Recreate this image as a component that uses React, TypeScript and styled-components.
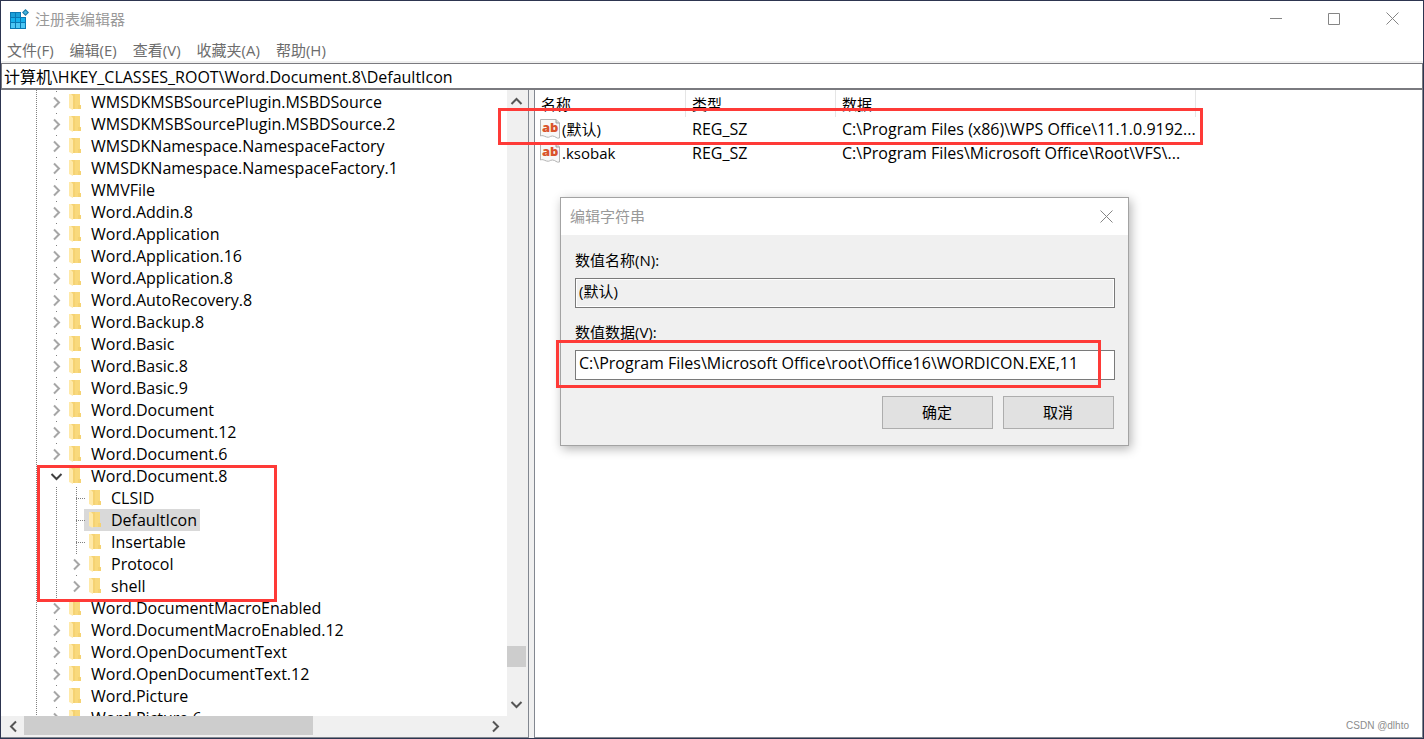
import React from "react";
import styled, { createGlobalStyle, css } from "styled-components";

const Global = createGlobalStyle`
  *, *::before, *::after { box-sizing: border-box; }
  body {
    margin: 0;
    background: #2d3550;
    color: #000;
    font: 15px/22px "Open Sans", "Noto Sans CJK SC", sans-serif;
  }
  button, input { font: inherit; color: inherit; }
  ul { list-style: none; margin: 0; padding: 0; }
`;

const Window = styled.div`
  position: relative;
  display: flex;
  flex-direction: column;
  height: 100vh;
  min-height: 480px;
  border: 1px solid #2d3550;
  background: #fff;
  overflow: hidden;
`;

const TitleBar = styled.header`
  display: flex;
  align-items: center;
  flex: none;
  height: 37px;
  padding: 0 2px 2px 8px;
  color: #999;
`;

const Title = styled.h1`
  flex: 1;
  margin: 0 0 0 6px;
  font-size: 15px;
  font-weight: 400;
`;

const PlainButton = styled.button`
  border: 0;
  padding: 0;
  background: none;
  display: flex;
  align-items: center;
  justify-content: center;
`;

const CaptionButton = styled(PlainButton)`
  width: 58px;
  height: 34px;
`;

const MenuBar = styled.nav`
  display: flex;
  flex: none;
  gap: 16px;
  height: 25px;
  padding: 0 6px;
  color: #6d6d6d;
  border-bottom: 2px solid #f0f0f0;
`;

const MenuButton = styled(PlainButton)`
  height: 23px;
  white-space: nowrap;
`;

const AddressInput = styled.input`
  flex: none;
  width: 100%;
  height: 27px;
  padding: 0 2px;
  border: 1px solid #7a7a7f;
  border-bottom-width: 2px;
  background: #fff;
  outline: 0;
  font-size: 16px;
`;

const Panes = styled.div`
  display: flex;
  flex: 1;
  min-height: 0;
  background: #f0f0f0;
  gap: 5px;
`;

const TreePane = styled.section`
  display: grid;
  grid-template-columns: 1fr 21px;
  grid-template-rows: minmax(0, 1fr) 21px;
  flex: none;
  width: 528px;
  border-right: 1px solid #828790;
  border-bottom: 1px solid #828790;
  background: #f0f0f0;
`;

const dotted = (angle: string) => css`
  background-image: repeating-linear-gradient(${angle}, #808080 0 1px, transparent 1px 2px);
`;

const TreeView = styled.div`
  position: relative;
  overflow: hidden;
  padding: 1px 0 0 35px;
  background: #fff;
  font-size: 16px;

  &::before {
    content: "";
    position: absolute;
    left: 35px;
    top: 0;
    bottom: 0;
    width: 1px;
    ${dotted("180deg")}
  }
`;

const Branch = styled.li`
  position: relative;
`;

const ChildList = styled.ul`
  padding-left: 20px;
`;

const ParentLine = styled.span`
  position: absolute;
  left: 20px;
  top: 22px;
  bottom: 0;
  width: 1px;
  ${dotted("180deg")}
`;

const Row = styled.div`
  display: flex;
  align-items: center;
  height: 22px;
`;

const Twisty = styled.span<{ $leaf?: boolean }>`
  position: relative;
  display: flex;
  align-items: center;
  justify-content: center;
  flex: none;
  width: 28px;
  height: 22px;
  padding-left: 12px;

  &::before {
    content: "";
    position: absolute;
    left: 20px;
    top: 0;
    width: 1px;
    height: ${(p) => (p.$leaf ? 22 : 1)}px;
    ${dotted("180deg")}
  }

  &::after {
    content: "";
    position: absolute;
    left: 20px;
    top: 11px;
    width: 9px;
    height: 1px;
    ${(p) => (p.$leaf ? dotted("90deg") : "")}
  }
`;

const NodeLabel = styled.span<{ $selected?: boolean }>`
  display: flex;
  align-items: center;
  gap: 8px;
  height: 22px;
  padding: 0 3px 0 5px;
  white-space: nowrap;
  background: ${(p) => (p.$selected ? "#d9d9d9" : "transparent")};
`;

const Mark = styled.span<{ $top: number; $right: number; $bottom: number; $left: number }>`
  position: absolute;
  z-index: 2;
  top: ${(p) => p.$top}px;
  right: ${(p) => p.$right}px;
  bottom: ${(p) => p.$bottom}px;
  left: ${(p) => p.$left}px;
  border: 3px solid #fe3a37;
  pointer-events: none;
`;

const VerticalBar = styled.div`
  display: flex;
  flex-direction: column;
  margin-right: 2px;
`;

const HorizontalBar = styled.div`
  display: flex;
  padding: 0 1px 0 2px;
`;

const ArrowButton = styled(PlainButton)`
  flex: none;
  width: 21px;
  height: 20px;
`;

const BarArrow = styled(ArrowButton)`
  width: 19px;
  height: 23px;
`;

const Track = styled.div<{ $vertical?: boolean }>`
  display: flex;
  flex: 1;
  flex-direction: ${(p) => (p.$vertical ? "column" : "row")};
`;

const Before = styled.div<{ $grow: number }>`
  flex: ${(p) => p.$grow};
`;

const Thumb = styled.div<{ $vertical?: boolean }>`
  flex: none;
  width: ${(p) => (p.$vertical ? "19px" : "289px")};
  height: ${(p) => (p.$vertical ? "21px" : "19px")};
  background: #cdcdcd;
`;

const ValuePane = styled.section`
  flex: 1;
  min-width: 0;
  border: solid #828790;
  border-width: 0 1px 1px 1px;
  background: #fff;
`;

const ValueTable = styled.table`
  position: relative;
  width: 661px;
  table-layout: fixed;
  border-collapse: separate;
  border-spacing: 0;
  text-align: left;
`;

const HeadCell = styled.th<{ $width: number }>`
  width: ${(p) => p.$width}px;
  height: 27px;
  padding: 0 6px;
  font-weight: 400;
  border-right: 1px solid #e5e5e5;
`;

const Cell = styled.td`
  height: 24px;
  padding: 0 0 0 6px;
  white-space: nowrap;
  font-size: 16px;
`;

const NameCell = styled.div`
  display: flex;
  align-items: center;
  gap: 2px;
  margin-left: -1px;
  font-size: 15px;
`;

const Dialog = styled.form`
  position: absolute;
  left: 559px;
  top: 196px;
  width: 569px;
  border: 1px solid #a3a3a3;
  background: #f0f0f0;
  box-shadow: 2px 3px 10px rgba(0, 0, 0, 0.3);
`;

const DialogTitle = styled.div`
  display: flex;
  align-items: center;
  justify-content: space-between;
  height: 37px;
  padding: 0 0 1px 9px;
  background: #fff;
  color: #999;
`;

const DialogClose = styled(PlainButton)`
  width: 43px;
  height: 36px;
`;

const DialogBody = styled.div`
  display: flex;
  flex-direction: column;
  padding: 14px 13px 16px 14px;
`;

const Field = styled.div`
  position: relative;
  display: flex;
  flex-direction: column;
  gap: 7px;
  margin-bottom: 13px;
`;

const FieldInput = styled.input<{ $muted?: boolean }>`
  height: 30px;
  padding: ${(p) => (p.$muted ? "0 3px 6px" : "0 3px 4px")};
  border: 1px solid #7a7a7a;
  outline: 0;
  background: ${(p) => (p.$muted ? "#f0f0f0" : "#fff")};
  box-shadow: inset 0 0 0 1px #fff;
  font-size: ${(p) => (p.$muted ? 15 : 16)}px;
`;

const Actions = styled.div`
  display: flex;
  justify-content: flex-end;
  gap: 10px;
  padding: 3px 1px 0 0;
`;

const ActionButton = styled.button`
  width: 111px;
  height: 33px;
  padding: 0 1px 2px 0;
  border: 1px solid #adadad;
  background: #e1e1e1;
`;

const Credit = styled.small`
  position: absolute;
  right: 14px;
  bottom: 4px;
  font: 10px/16px "Liberation Sans", sans-serif;
  color: #8c8c8c;
`;

const RegistryIcon = () => (
  <svg width="20" height="20" viewBox="0 0 20 20" aria-hidden="true">
    <path d="M1 3h11v5h5v12H1z" fill="#0878b4" />
    <path d="M2 4h4v4H2zM7 4h4v4H7z" fill="#1a9fd8" />
    <path d="M2 9h4v4H2zM7 9h4v4H7zM12 9h4v4h-4z" fill="#16b0ec" />
    <path d="M2 14h4v5H2zM7 14h4v5H7zM12 14h4v5h-4z" fill="#4cc6f4" />
    <path d="M16.500 0L20 3.500 16.500 7 13 3.500z" fill="#1778a8" />
    <path d="M16.500 1.500l2 2-2 2-2-2z" fill="#45b4dd" />
  </svg>
);

const FolderIcon = () => (
  <svg width="14" height="16" viewBox="0 0 14 16" aria-hidden="true">
    <path d="M2 0h9v11h1v4H2z" fill="#f5d272" />
    <path d="M6 0h5v11H9v4H6z" fill="#f9d97c" />
    <path d="M0 0h2l2 2v14l-4-2z" fill="#ffe9a8" />
  </svg>
);

const StringIcon = () => (
  <svg width="20" height="20" viewBox="0 0 20 20" overflow="visible" aria-hidden="true">
    <path d="M.5.500H16l3.500 3.500v15c-3 1-4-2-7-2s-3 2-6 1-4-2-6-1z" fill="#f7f7f7" stroke="#b4b4b4" />
    <path d="M16 .5V4h3.500" fill="#ddd" stroke="#a0a0a0" />
    <text x="2" y="13" fontFamily="Open Sans, sans-serif" fontSize="13" fontWeight="800" fill="#d9532c">ab</text>
  </svg>
);

const CloseIcon = () => (
  <svg width="13" height="13" viewBox="0 0 13 13" stroke="#858585" aria-hidden="true">
    <path d="M.5.5l12 12M12.500.5l-12 12" />
  </svg>
);

const turns = { right: 0, down: 90, left: 180, up: 270 };

const Chevron = ({ to, color = "#555" }: { to: keyof typeof turns; color?: string }) => (
  <svg width="13" height="13" viewBox="0 0 13 13" fill="none" stroke={color} strokeWidth="2" aria-hidden="true">
    <path d="M4 1.500l5 5-5 5" transform={`rotate(${turns[to]} 6.500 6.500)`} />
  </svg>
);

type Node = { name: string; leaf?: boolean; selected?: boolean; children?: Node[] };

const nodes: Node[] = [
  { name: "WMSDKMSBSourcePlugin.MSBDSource" },
  { name: "WMSDKMSBSourcePlugin.MSBDSource.2" },
  { name: "WMSDKNamespace.NamespaceFactory" },
  { name: "WMSDKNamespace.NamespaceFactory.1" },
  { name: "WMVFile" },
  { name: "Word.Addin.8" },
  { name: "Word.Application" },
  { name: "Word.Application.16" },
  { name: "Word.Application.8" },
  { name: "Word.AutoRecovery.8" },
  { name: "Word.Backup.8" },
  { name: "Word.Basic" },
  { name: "Word.Basic.8" },
  { name: "Word.Basic.9" },
  { name: "Word.Document" },
  { name: "Word.Document.12" },
  { name: "Word.Document.6" },
  {
    name: "Word.Document.8",
    children: [
      { name: "CLSID", leaf: true },
      { name: "DefaultIcon", leaf: true, selected: true },
      { name: "Insertable", leaf: true },
      { name: "Protocol" },
      { name: "shell" },
    ],
  },
  { name: "Word.DocumentMacroEnabled" },
  { name: "Word.DocumentMacroEnabled.12" },
  { name: "Word.OpenDocumentText" },
  { name: "Word.OpenDocumentText.12" },
  { name: "Word.Picture" },
  { name: "Word.Picture.6" },
];

const TreeNode = ({ node }: { node: Node }) => (
  <Branch>
    <Row>
      <Twisty $leaf={node.leaf}>
        {!node.leaf && <Chevron to={node.children ? "down" : "right"} color={node.children ? "#404040" : "#a6a6a6"} />}
      </Twisty>
      <NodeLabel $selected={node.selected}>
        <FolderIcon />
        {node.name}
      </NodeLabel>
    </Row>
    {node.children && (
      <>
        <ChildList>
          {node.children.map((child) => (
            <TreeNode key={child.name} node={child} />
          ))}
        </ChildList>
        <ParentLine />
        <Mark $top={0} $right={230} $bottom={-5} $left={1} />
      </>
    )}
  </Branch>
);

const values = [
  { name: "(默认)", type: "REG_SZ", data: "C:\\Program Files (x86)\\WPS Office\\11.1.0.9192..." },
  { name: ".ksobak", type: "REG_SZ", data: "C:\\Program Files\\Microsoft Office\\Root\\VFS\\..." },
];

const menus = ["文件(F)", "编辑(E)", "查看(V)", "收藏夹(A)", "帮助(H)"];

export default function App() {
  return (
    <Window>
      <Global />
      <TitleBar>
        <RegistryIcon />
        <Title>注册表编辑器</Title>
        <CaptionButton aria-label="最小化">
          <svg width="12" height="12" viewBox="0 0 12 12" stroke="#858585" aria-hidden="true"><path d="M0 5.500h12" /></svg>
        </CaptionButton>
        <CaptionButton aria-label="最大化">
          <svg width="12" height="12" viewBox="0 0 12 12" fill="none" stroke="#858585" aria-hidden="true"><path d="M.5.5h11v11H.5z" /></svg>
        </CaptionButton>
        <CaptionButton aria-label="关闭"><CloseIcon /></CaptionButton>
      </TitleBar>
      <MenuBar>
        {menus.map((menu) => <MenuButton key={menu}>{menu}</MenuButton>)}
      </MenuBar>
      <AddressInput aria-label="地址" defaultValue="计算机\HKEY_CLASSES_ROOT\Word.Document.8\DefaultIcon" />
      <Panes>
        <TreePane>
          <TreeView>
            <ul>
              {nodes.map((node) => <TreeNode key={node.name} node={node} />)}
            </ul>
          </TreeView>
          <VerticalBar>
            <BarArrow aria-label="向上滚动"><Chevron to="up" /></BarArrow>
            <Track $vertical>
              <Before $grow={533} />
              <Thumb $vertical />
              <Before $grow={26} />
            </Track>
            <BarArrow aria-label="向下滚动"><Chevron to="down" /></BarArrow>
          </VerticalBar>
          <HorizontalBar>
            <ArrowButton aria-label="向左滚动"><Chevron to="left" /></ArrowButton>
            <Track>
              <Thumb />
            </Track>
            <ArrowButton aria-label="向右滚动"><Chevron to="right" /></ArrowButton>
          </HorizontalBar>
        </TreePane>
        <ValuePane>
          <ValueTable>
            <caption><Mark $top={18} $right={-7} $bottom={20} $left={-37} /></caption>
            <thead>
              <tr>
                <HeadCell $width={151}>名称</HeadCell>
                <HeadCell $width={150}>类型</HeadCell>
                <HeadCell $width={360}>数据</HeadCell>
              </tr>
            </thead>
            <tbody>
              {values.map((value) => (
                <tr key={value.name}>
                  <Cell><NameCell><StringIcon />{value.name}</NameCell></Cell>
                  <Cell>{value.type}</Cell>
                  <Cell>{value.data}</Cell>
                </tr>
              ))}
            </tbody>
          </ValueTable>
        </ValuePane>
      </Panes>
      <Dialog onSubmit={(event) => event.preventDefault()}>
        <DialogTitle>
          编辑字符串
          <DialogClose type="button" aria-label="关闭"><CloseIcon /></DialogClose>
        </DialogTitle>
        <DialogBody>
          <Field>
            <label htmlFor="value-name">数值名称(N):</label>
            <FieldInput id="value-name" $muted readOnly value="(默认)" />
          </Field>
          <Field>
            <label htmlFor="value-data">数值数据(V):</label>
            <FieldInput id="value-data" defaultValue="C:\Program Files\Microsoft Office\root\Office16\WORDICON.EXE,11" />
            <Mark $top={19} $right={14} $bottom={-8} $left={-19} />
          </Field>
          <Actions>
            <ActionButton type="submit">确定</ActionButton>
            <ActionButton type="button">取消</ActionButton>
          </Actions>
        </DialogBody>
      </Dialog>
      <Credit>CSDN @dlhto</Credit>
    </Window>
  );
}
